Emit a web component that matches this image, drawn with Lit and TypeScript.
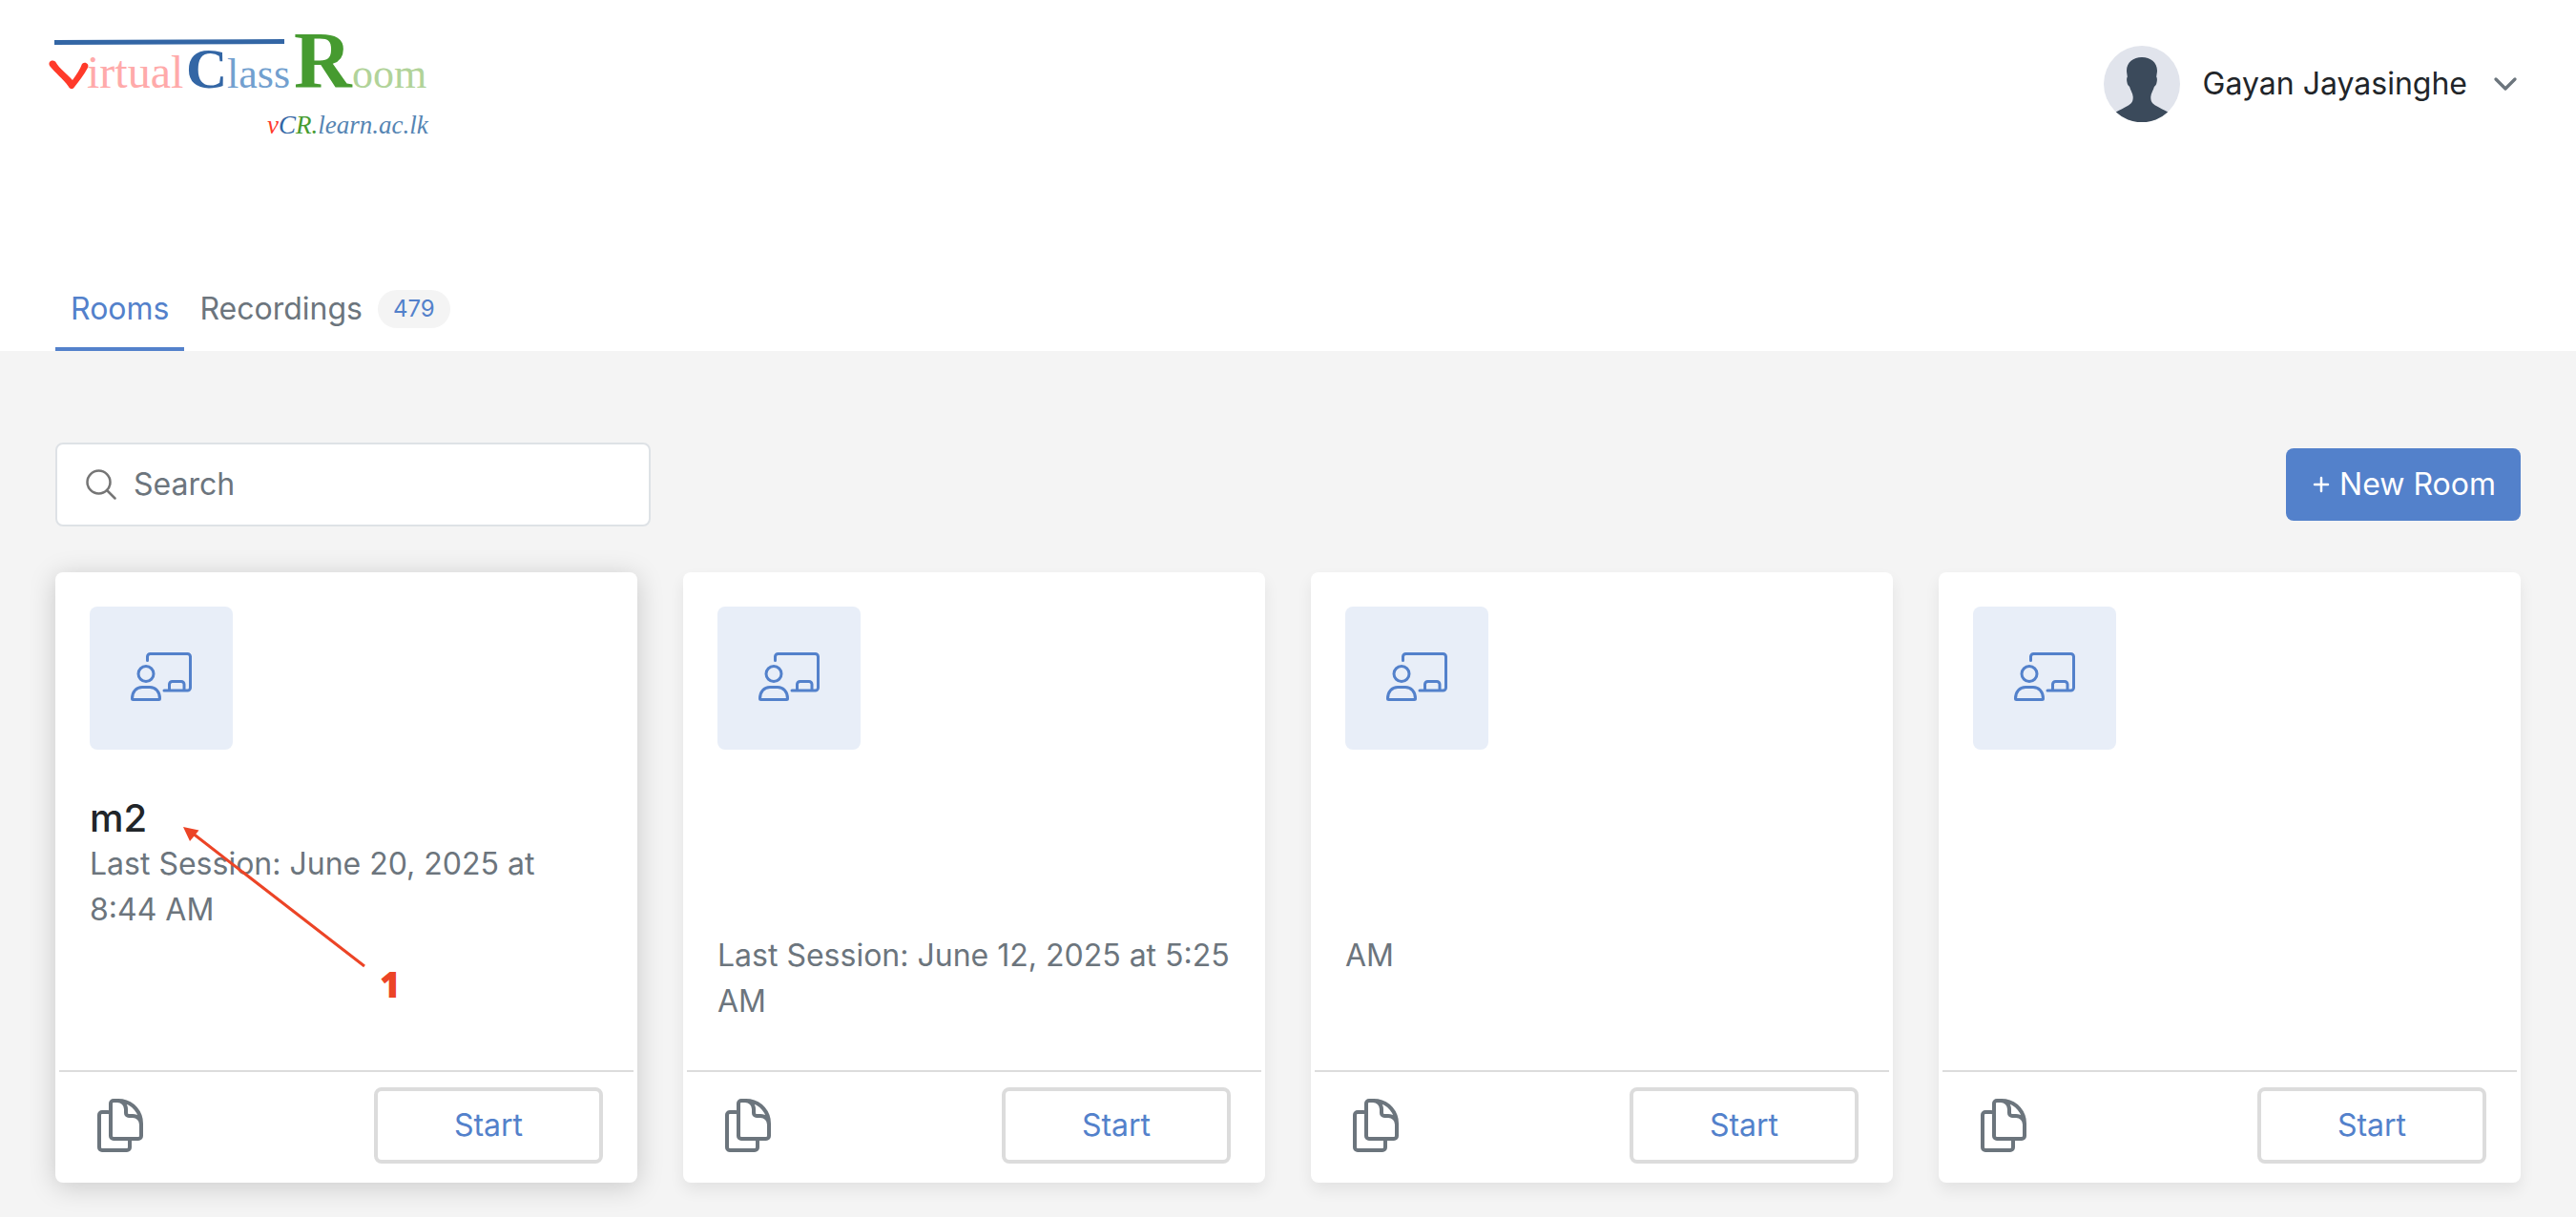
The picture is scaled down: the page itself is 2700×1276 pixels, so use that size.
import { LitElement, html, css, nothing } from "lit";
import { customElement, property } from "lit/decorators.js";
import { classMap } from "lit/directives/class-map.js";

interface Room {
  name: string;
  session: string;
  active?: boolean;
  marker?: string;
}

const ROOMS: Room[] = [
  { name: "m2", session: "Last Session: June 20, 2025 at 8:44 AM", active: true, marker: "1" },
  { name: "", session: "Last Session: June 12, 2025 at 5:25 AM" },
  { name: "", session: "AM" },
  { name: "", session: "" },
];

@customElement("room-card")
class RoomCard extends LitElement {
  @property({ attribute: false }) room!: Room;

  static styles = css`
    :host {
      display: flex;
    }
    .card {
      position: relative;
      flex: 1;
      min-width: 0;
      display: flex;
      flex-direction: column;
      background: #fff;
      border-radius: 8px;
      box-shadow: 0 8px 16px rgba(0, 0, 0, 0.07);
    }
    .card.active {
      box-shadow: 0 4px 28px rgba(0, 0, 0, 0.18);
    }
    .body {
      flex: 1;
      padding: 36px 36px 48px;
    }
    .tile {
      display: flex;
      align-items: center;
      justify-content: center;
      width: 150px;
      height: 150px;
      margin-bottom: 48px;
      border-radius: 8px;
      background: #e8eef8;
      color: #5381cb;
    }
    .name {
      margin: 0;
      font-size: 40px;
      line-height: 48px;
      font-weight: 500;
      color: #212529;
    }
    .name.blank {
      height: 144px;
    }
    .session {
      margin: 0;
      color: #6c757d;
    }
    .footer {
      display: flex;
      align-items: center;
      justify-content: space-between;
      margin: 0 4px;
      padding: 16px 32px 20px;
      border-top: 2px solid #dcdcdc;
    }
    button {
      font: inherit;
      cursor: pointer;
    }
    .copy {
      display: flex;
      padding: 0;
      border: 0;
      background: none;
      color: #6c757d;
    }
    .start {
      width: 240px;
      height: 80px;
      padding: 0;
      border: 4px solid #dcdcdc;
      border-radius: 8px;
      background: #fff;
      color: #5381cb;
    }
    .marker {
      position: absolute;
      left: 120px;
      top: 256px;
      pointer-events: none;
    }
    .marker text {
      font: 800 37px "Open Sans", "Noto Sans", sans-serif;
    }
  `;

  render() {
    const { name, session, active, marker } = this.room;
    return html`
      <article class=${classMap({ card: true, active: !!active })}>
        <div class="body">
          <div class="tile">
            <svg width="64" height="54" viewBox="0 0 64 54" fill="none" stroke="currentColor"
              stroke-width="3" stroke-linecap="round" stroke-linejoin="round" aria-hidden="true">
              <path d="M17.500 8.500V4.500a3 3 0 0 1 3-3H59.500a3 3 0 0 1 3 3V37a3 3 0 0 1-3 3H35" />
              <path d="M40.500 39V33.500a3 3 0 0 1 3-3h9.500a3 3 0 0 1 3 3V39" />
              <circle cx="16" cy="22.500" r="8" />
              <path d="M1.500 48.500C1.500 41 6 36.500 12 36.500h8C26 36.500 30.500 41 30.500 48.500a1 1 0 0 1-1 1h-27a1 1 0 0 1-1-1z" />
            </svg>
          </div>
          <h2 class=${classMap({ name: true, blank: !name })}>${name}</h2>
          <p class="session">${session}</p>
        </div>
        <div class="footer">
          <button class="copy" type="button" aria-label="Copy">
            <svg width="64" height="64" viewBox="0 0 24 24" fill="none" stroke="currentColor"
              stroke-width="1.5" stroke-linecap="round" stroke-linejoin="round" aria-hidden="true">
              <path d="M15.75 17.25v3.375c0 .621-.504 1.125-1.125 1.125h-9.750a1.125 1.125 0 0 1-1.125-1.125V7.875c0-.621.504-1.125 1.125-1.125H6.750a9.060 9.060 0 0 1 1.500.124m7.500 10.376h3.375c.621 0 1.125-.504 1.125-1.125V11.250c0-4.460-3.243-8.161-7.500-8.876a9.060 9.060 0 0 0-1.500-.124H9.375c-.621 0-1.125.504-1.125 1.125v3.500m7.500 10.375H9.375a1.125 1.125 0 0 1-1.125-1.125v-9.250m12 6.625v-1.875a3.375 3.375 0 0 0-3.375-3.375h-1.500a1.125 1.125 0 0 1-1.125-1.125v-1.500a3.375 3.375 0 0 0-3.375-3.375H9.750" />
            </svg>
          </button>
          <button class="start" type="button">Start</button>
        </div>
        ${marker
          ? html`<svg class="marker" width="260" height="204" viewBox="120 256 260 204" fill="#ec4426">
              <path d="M143 273L324 413" stroke="#ec4426" stroke-width="3" />
              <path d="M134 267l16.500 3.500-9.500 11.500z" />
              <text x="340" y="446">${marker}</text>
            </svg>`
          : nothing}
      </article>
    `;
  }
}

@customElement("app-root")
class AppRoot extends LitElement {
  static styles = css`
    :host {
      display: flex;
      flex-direction: column;
      min-height: 100vh;
      background: #f4f4f4;
      color: #212529;
      font-family: Inter, "Liberation Sans", sans-serif;
      font-size: 32px;
      line-height: 48px;
    }
    a {
      color: inherit;
      text-decoration: none;
    }
    button,
    input {
      font: inherit;
    }
    header {
      background: #fff;
    }
    .bar {
      display: flex;
      align-items: center;
      justify-content: space-between;
      padding: 8px 58px 116px 48px;
    }
    .logo {
      display: flex;
    }
    .logo svg {
      overflow: visible;
    }
    .logo text {
      font-family: "Liberation Serif", serif;
    }
    .l-title {
      font-size: 44px;
    }
    .l-virtual {
      font-size: 48px;
    }
    .l-c {
      font-size: 60px;
      font-weight: 700;
    }
    .l-r {
      font-size: 84px;
      font-weight: 700;
    }
    .l-domain {
      font-size: 27px;
      font-style: italic;
    }
    .pink {
      fill: #ffaaaa;
    }
    .red {
      fill: #ff3a2a;
    }
    .blue {
      fill: #3366a5;
    }
    .sky {
      fill: #72a0cf;
    }
    .green {
      fill: #469b30;
    }
    .lime {
      fill: #b1d399;
    }
    .steel {
      fill: #5685b3;
    }
    .user {
      display: flex;
      align-items: center;
      gap: 24px;
      padding: 0;
      border: 0;
      background: none;
      color: inherit;
      cursor: pointer;
    }
    .chevron {
      color: #6c757d;
    }
    .tabs {
      display: flex;
      padding: 0 58px;
    }
    .tab {
      display: flex;
      align-items: center;
      gap: 16px;
      padding: 16px 16px;
      border-bottom: 4px solid transparent;
      color: #6c757d;
    }
    .tab.current {
      color: #5381cb;
      border-color: #5381cb;
    }
    .badge {
      padding: 0 16px;
      border-radius: 20px;
      background: #f4f4f4;
      color: #5381cb;
      font-size: 24px;
      line-height: 40px;
    }
    main {
      padding: 96px 58px 36px;
    }
    .tools {
      display: flex;
      align-items: center;
      justify-content: space-between;
      margin-bottom: 48px;
    }
    .search {
      display: flex;
      align-items: center;
      gap: 18px;
      box-sizing: border-box;
      width: 624px;
      height: 88px;
      padding: 0 30px;
      border: 2px solid #dee2e6;
      border-radius: 8px;
      background: #fff;
      color: #757575;
    }
    .search input {
      flex: 1;
      min-width: 0;
      padding: 0;
      border: 0;
      outline: 0;
      background: none;
      color: #212529;
    }
    .search input::placeholder {
      color: #6c757d;
      opacity: 1;
    }
    .new {
      display: flex;
      align-items: center;
      gap: 10px;
      height: 76px;
      padding: 0 26px;
      border: 0;
      border-radius: 8px;
      background: #5381cb;
      color: #fff;
      cursor: pointer;
    }
    .rooms {
      display: grid;
      grid-template-columns: repeat(4, minmax(0, 1fr));
      gap: 48px;
    }
  `;

  render() {
    return html`
      <header>
        <div class="bar">
          <a class="logo" href="#" aria-label="Virtual Class Room">
            <svg width="404" height="160" viewBox="48 8 404 160">
              <path class="blue" d="M57 42l241-1v5l-241 1z" />
              <path d="M52 69C50 65 54 62 58 64.500C63 73 70 77 76 84C80 78 84 73 86 67C89 64 94 67 92 71C88 79 82 86 77 92.500C75 94 73 93 72 91C66 82 58 77 52 69z" fill="#ff3a2a" />
              <text class="l-virtual pink" x="91" y="92">irtual</text>
              <text class="l-c blue" x="195" y="92">C</text>
              <text class="l-title sky" x="238" y="92">lass</text>
              <text class="l-r green" x="308" y="92">R</text>
              <text class="l-title lime" x="369" y="92">oom</text>
              <text class="l-domain" x="280" y="140"><tspan class="red">v</tspan><tspan class="blue">C</tspan><tspan class="green">R.</tspan><tspan class="steel">learn.ac.lk</tspan></text>
            </svg>
          </a>
          <button class="user" type="button">
            <svg width="80" height="80" viewBox="0 0 80 80" aria-hidden="true">
              <circle cx="40" cy="40" r="40" fill="#e1e4ec" />
              <path fill="#3b4a5b" d="M40 12C31 12 24 17.500 24 26c0 2 .5 4 .8 6.500-1 1.500-.8 4-.3 6 .4 2 1 3.500 2.500 4.200 1 4 3.500 6.800 3.700 10.800.2 5-1.700 7-5.700 9.500-3.500 2.200-8 4-12.200 6.600A40 40 0 0 0 67.200 69.600C63 67 58.500 65.200 55 63c-4-2.500-5.900-4.500-5.700-9.500.2-4 2.700-6.800 3.700-10.800 1.500-.7 2.100-2.200 2.500-4.200.5-2 .7-4.500-.3-6 .3-2.500.8-4.500.8-6.500C56 17.500 49 12 40 12z" />
            </svg>
            <span>Gayan Jayasinghe</span>
            <svg class="chevron" width="32" height="32" viewBox="0 0 24 24" fill="none" stroke="currentColor"
              stroke-width="2.500" stroke-linecap="round" stroke-linejoin="round" aria-hidden="true">
              <path d="M19.500 8.250l-7.500 7.500-7.500-7.500" />
            </svg>
          </button>
        </div>
        <nav class="tabs">
          <a class="tab current" href="#rooms" aria-current="page">Rooms</a>
          <a class="tab" href="#recordings">Recordings <span class="badge">479</span></a>
        </nav>
      </header>
      <main>
        <div class="tools">
          <label class="search">
            <svg width="32" height="32" viewBox="0 0 32 32" fill="none" stroke="currentColor"
              stroke-width="2.500" stroke-linecap="round" aria-hidden="true">
              <circle cx="13.500" cy="13.500" r="12" />
              <path d="M22.500 22.500l8 8" />
            </svg>
            <input type="search" placeholder="Search" aria-label="Search" />
          </label>
          <button class="new" type="button">
            <svg width="20" height="20" viewBox="0 0 20 20" stroke="currentColor" stroke-width="2.500"
              stroke-linecap="round" aria-hidden="true">
              <path d="M11 3v14M4 10h14" />
            </svg>
            New Room
          </button>
        </div>
        <section class="rooms">
          ${ROOMS.map((room) => html`<room-card .room=${room}></room-card>`)}
        </section>
      </main>
    `;
  }
}
